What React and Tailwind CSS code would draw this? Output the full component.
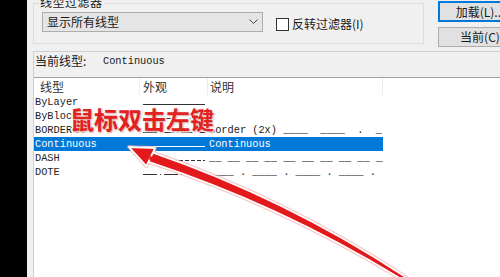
import React from "react";

const cjk = "font-['Noto_Sans_CJK_SC','Noto_Sans',sans-serif]";
const mono = "font-['Liberation_Mono',monospace]";

const rows = [
  { name: "ByLayer", look: "solid", desc: "" },
  { name: "ByBlock", look: "solid", desc: "" },
  { name: "BORDERX2", look: "border", desc: "Border (2x) ____  ____  .  _" },
  { name: "Continuous", look: "solid", desc: "Continuous", selected: true },
  { name: "DASH", look: "dash", desc: "__ __ __ __ __ __ __ __ __ __" },
  { name: "DOTE", look: "dote", desc: "____ . ____ . ____ . ____ ." },
];

const dashes = {
  solid: undefined,
  border: "14 3 14 3 1 3",
  dash: "4 2",
  dote: "14 3 1 3",
};

function Look({ look, selected }) {
  return (
    <svg width="62" height="14" className="block">
      <line
        x1="0"
        y1="9.5"
        x2="62"
        y2="9.5"
        stroke={selected ? "#ffffff" : "#333333"}
        strokeWidth="1"
        strokeDasharray={dashes[look]}
      />
    </svg>
  );
}

const shaft =
  "M152.2,152.5 Q285.7,198.4 405.9,277.2 L404.1,280.8 Q282.3,205.6 147.8,161.5 Z";
const head = "M129,147 L155,148.2 L146.4,166.2 Z";

function Arrow() {
  return (
    <svg
      width="500"
      height="277"
      viewBox="0 0 500 277"
      className="absolute inset-0 pointer-events-none"
    >
      {/* soft pink halo */}
      <g stroke="#f2a9a9" strokeWidth="4" strokeLinejoin="round" fill="#f2a9a9" opacity="0.6">
        <path d={shaft} />
        <path d={head} />
      </g>
      {/* white edge + red body */}
      <g stroke="#ffffff" strokeWidth="1.8" strokeLinejoin="round" fill="#e3191c">
        <path d={shaft} />
        <path d={head} />
      </g>
      <path d="M150,156 Q284,201.5 405,278.5 L405,279.5 Q283.5,203 149,159.5 Z" fill="#e3191c" />
    </svg>
  );
}

export default function App() {
  return (
    <div className="relative w-[500px] h-[277px] overflow-hidden flex bg-black">
      {/* black strip on the left */}
      <div className="w-[27px] shrink-0 bg-black" />

      <div className={`flex-1 flex flex-col bg-[#f0f0f0] text-[#1a1a1a] ${cjk}`}>
        {/* filter group + buttons */}
        <div className="flex h-[47px]">
          <div className="relative mt-[3px] ml-[6px] w-[391px] h-[41px] border border-[#dcdcdc] flex items-start shrink-0">
            <span className="absolute left-[5px] top-[-9px] px-[1px] bg-[#f0f0f0] text-[12px] leading-[14px] tracking-[0.5px]">
              线型过滤器
            </span>
            <div className="ml-[8px] mt-[8px] w-[221px] h-[20px] border border-[#adadad] bg-[#e5e5e5] flex items-center justify-between pl-[4px] pr-[4px]">
              <span className="text-[12px] leading-[14px]">显示所有线型</span>
              <svg width="9" height="6" viewBox="0 0 9 6">
                <polyline points="0.5,0.5 4.5,4.5 8.5,0.5" fill="none" stroke="#444" strokeWidth="1" />
              </svg>
            </div>
            <div className="ml-[13px] mt-[13px] flex items-center">
              <div className="w-[13px] h-[13px] border border-[#333] bg-white" />
              <span className="ml-[3px] text-[12px] leading-[14px]">反转过滤器(I)</span>
            </div>
          </div>

          <div className="ml-[14px] flex flex-col shrink-0">
            <button className="mt-[1px] w-[84px] h-[21px] border-2 border-[#0078d7] bg-[#e1e1e1] text-[12px] leading-[14px] flex items-center justify-center">
              加载(L)...
            </button>
            <button className="mt-[5px] w-[84px] h-[20px] border border-[#adadad] bg-[#e1e1e1] text-[12px] leading-[14px] flex items-center justify-center">
              当前(C)
            </button>
          </div>
        </div>

        {/* current linetype + list */}
        <div className="mt-[4px] ml-[6px] flex-1 flex flex-col border-l border-t border-[#cfcfcf]">
          <div className="h-[25px] flex items-start pt-[2px] pl-[1px]">
            <span className="w-[68px] text-[12px] leading-[14px]">当前线型:</span>
            <span className={`${mono} text-[10.3px] leading-[14px]`}>Continuous</span>
          </div>

          <div className="flex-1 bg-white border-t border-[#a0a0a0]">
            <div className="flex h-[17px] text-[12px] leading-[14px] text-[#333]">
              <div className="w-[106px] pl-[6px] pt-[2px] border-r border-[#ececec]">线型</div>
              <div className="w-[68px] pl-[3px] pt-[2px] border-r border-[#ececec]">外观</div>
              <div className="w-[175px] pl-[2px] pt-[2px] border-r border-[#ececec]">说明</div>
            </div>
            {rows.map((r) => (
              <div
                key={r.name}
                className={`flex w-[349px] h-[14px] items-center ${mono} text-[10.3px] leading-[14px] ${
                  r.selected ? "bg-[#0078d7] text-white" : "text-[#222]"
                }`}
              >
                <div className="w-[106px] pl-[1px]">{r.name}</div>
                <div className="w-[68px] pl-[3px]">
                  <Look look={r.look} selected={r.selected} />
                </div>
                <div className="w-[175px] pl-[1px] overflow-hidden whitespace-pre">{r.desc}</div>
              </div>
            ))}
          </div>
        </div>
      </div>

      {/* annotation */}
      <span
        className={`absolute left-[70px] top-[107px] text-[24px] leading-none font-semibold text-[#e3211f] ${cjk} [-webkit-text-stroke:3px_white] [paint-order:stroke_fill] [text-shadow:1px_1px_2px_rgba(120,0,0,0.35)]`}
      >
        鼠标双击左键
      </span>
      <Arrow />
    </div>
  );
}
